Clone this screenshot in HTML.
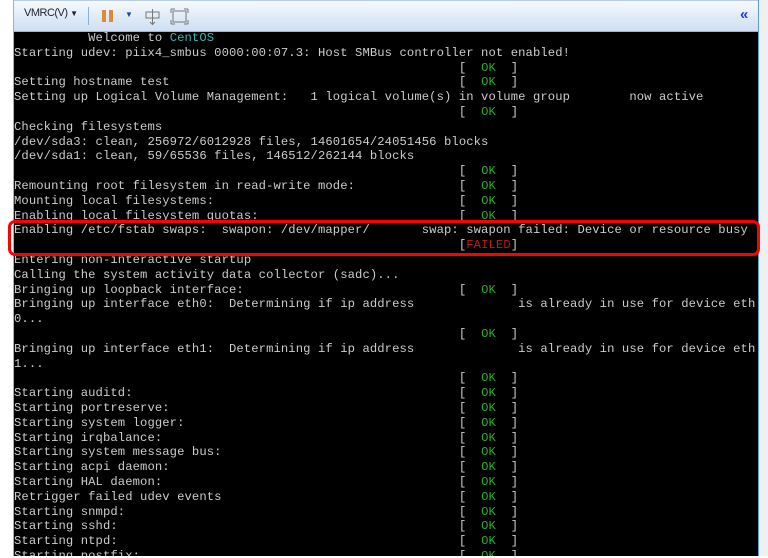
<!DOCTYPE html>
<html><head><meta charset="utf-8"><style>
html,body{margin:0;padding:0;width:768px;height:558px;overflow:hidden;background:#fff;position:relative;font-family:"Liberation Sans",sans-serif}
#side{position:absolute;left:758px;top:0;width:10px;height:558px;background:#eef0f2}
#win{position:absolute;left:13px;top:0;width:744px;height:556px;border-left:1px solid #8fb4e0;border-right:1px solid #5a9be0;background:#000}
#tb{position:absolute;left:0;top:0;width:744px;height:30px;background:linear-gradient(#f7fafe,#dde9f7 60%,#cfdff2);border-bottom:1px solid #9bb7d8;border-top:1px solid #b8cde6}
#term{position:absolute;left:14px;top:31px;margin:0;font-family:"Liberation Mono","DejaVu Sans Mono",monospace;font-size:12.2px;line-height:14.8px;color:#cccccc;white-space:pre;letter-spacing:0.1px}
.g{color:#22b022}.r{color:#c81818}.c{color:#2fb8b8}
#box{position:absolute;left:8px;top:220px;width:746px;height:30px;border:3px solid #f00;border-radius:7px}
</style></head><body>
<div id="side"></div>
<div id="win">
<div id="tb">
<span style="position:absolute;left:10px;top:6px;font-size:11px;color:#223;letter-spacing:-0.5px">VMRC(V) <span style="font-size:8px">▼</span></span>
<div style="position:absolute;left:74px;top:6px;width:1px;height:18px;background:#8ab0dc"></div>
<div style="position:absolute;left:88px;top:9px;width:4px;height:12px;background:#e08a35"></div>
<div style="position:absolute;left:95px;top:9px;width:4px;height:12px;background:#e08a35"></div>
<span style="position:absolute;left:111px;top:9px;font-size:8px;color:#2244bb">▼</span>
<svg style="position:absolute;left:130px;top:7px" width="18" height="18" viewBox="0 0 18 18"><rect x="2" y="4" width="13" height="6" fill="none" stroke="#777"/><line x1="8.5" y1="1" x2="8.5" y2="16" stroke="#777"/><path d="M6 14l2.5 2.5L11 14" fill="none" stroke="#777"/></svg>
<svg style="position:absolute;left:156px;top:7px" width="20" height="18" viewBox="0 0 20 18"><rect x="3" y="3" width="13" height="11" fill="none" stroke="#777"/><path d="M1 1h4M1 1v4M18 1h-4M18 1v4M1 16h4M1 16v-4M18 16h-4M18 16v-4" stroke="#777"/></svg>
<span style="position:absolute;left:726px;top:5px;font-size:15px;font-weight:bold;color:#2233ee">«</span>
</div>
</div>
<pre id="term">          Welcome to <span class="c">CentOS</span>
Starting udev: piix4_smbus 0000:00:07.3: Host SMBus controller not enabled!
                                                            [  <span class="g">OK</span>  ]
Setting hostname test                                       [  <span class="g">OK</span>  ]
Setting up Logical Volume Management:   1 logical volume(s) in volume group        now active
                                                            [  <span class="g">OK</span>  ]
Checking filesystems
/dev/sda3: clean, 256972/6012928 files, 14601654/24051456 blocks
/dev/sda1: clean, 59/65536 files, 146512/262144 blocks
                                                            [  <span class="g">OK</span>  ]
Remounting root filesystem in read-write mode:              [  <span class="g">OK</span>  ]
Mounting local filesystems:                                 [  <span class="g">OK</span>  ]
Enabling local filesystem quotas:                           [  <span class="g">OK</span>  ]
Enabling /etc/fstab swaps:  swapon: /dev/mapper/       swap: swapon failed: Device or resource busy
                                                            [<span class="r">FAILED</span>]
Entering non-interactive startup
Calling the system activity data collector (sadc)...
Bringing up loopback interface:                             [  <span class="g">OK</span>  ]
Bringing up interface eth0:  Determining if ip address              is already in use for device eth
0...
                                                            [  <span class="g">OK</span>  ]
Bringing up interface eth1:  Determining if ip address              is already in use for device eth
1...
                                                            [  <span class="g">OK</span>  ]
Starting auditd:                                            [  <span class="g">OK</span>  ]
Starting portreserve:                                       [  <span class="g">OK</span>  ]
Starting system logger:                                     [  <span class="g">OK</span>  ]
Starting irqbalance:                                        [  <span class="g">OK</span>  ]
Starting system message bus:                                [  <span class="g">OK</span>  ]
Starting acpi daemon:                                       [  <span class="g">OK</span>  ]
Starting HAL daemon:                                        [  <span class="g">OK</span>  ]
Retrigger failed udev events                                [  <span class="g">OK</span>  ]
Starting snmpd:                                             [  <span class="g">OK</span>  ]
Starting sshd:                                              [  <span class="g">OK</span>  ]
Starting ntpd:                                              [  <span class="g">OK</span>  ]
Starting postfix:                                           [  <span class="g">OK</span>  ]</pre>
<div style="position:absolute;left:0;top:556px;width:768px;height:2px;background:#fff"></div>
<div id="box"></div>
</body></html>
